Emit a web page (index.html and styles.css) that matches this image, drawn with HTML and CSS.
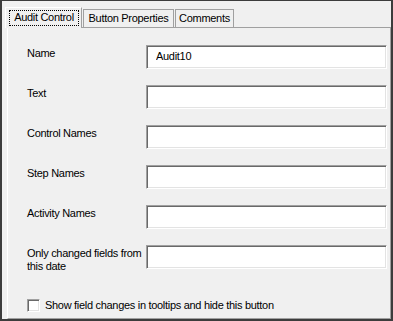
FILE: index.html
```html
<!DOCTYPE html>
<html>
<head>
  <title>Audit Control</title>
  <link rel="stylesheet" href="styles.css">
</head>

<body>
  <div class="window">
    <div class="tabs">
      <div class="tab tab-active"><span class="focus">Audit Control</span></div>
      <div class="tab tab-props">Button Properties</div>
      <div class="tab tab-comments">Comments</div>
    </div>

    <div class="page">
      <div class="row">
        <label for="name-input">Name</label>
        <input type="text" id="name-input" value="Audit10">
      </div>
      <div class="row">
        <label for="text-input">Text</label>
        <input type="text" id="text-input">
      </div>
      <div class="row">
        <label for="control-input">Control Names</label>
        <input type="text" id="control-input">
      </div>
      <div class="row">
        <label for="step-input">Step Names</label>
        <input type="text" id="step-input">
      </div>
      <div class="row">
        <label for="activity-input">Activity Names</label>
        <input type="text" id="activity-input">
      </div>
      <div class="row">
        <label for="date-input">Only changed fields from this date</label>
        <input type="text" id="date-input">
      </div>

      <div class="check-row">
        <span class="check-box"></span>
        <span>Show field changes in tooltips and hide this button</span>
      </div>
    </div>
  </div>
</body>
</html>
```

FILE: styles.css
```css
body {
  margin: 0;
  background-color: #f0f0f0;
  font-family: "Liberation Sans", Arial, sans-serif;
  font-size: 11px;
  line-height: 13px;
  letter-spacing: -0.3px;
  color: #000;
}

.window {
  display: flex;
  flex-direction: column;
  height: 321px;
  box-sizing: border-box;
  border: 2px solid #3c3c3c;
  border-top-width: 1px;
}

/* tab strip */
.tabs {
  display: flex;
  align-items: flex-end;
  height: 20px;
  padding: 6px 0 0 3px;
}

.tab {
  box-sizing: border-box;
  height: 18px;
  padding-top: 2px;
  border: 1px solid #a0a0a0;
  border-bottom: none;
  background-color: #f0f0f0;
  text-align: center;
  white-space: nowrap;
}

.tab-active {
  position: relative;
  z-index: 1;
  width: 77px;
  height: 21px;
  margin-bottom: -1px;
  padding-top: 0;
  border-color: #fff #a0a0a0 #fff #fff;
}

.tab-props {
  width: 91px;
  margin-left: 1px;
}

.tab-comments {
  width: 59px;
  margin-left: 1px;
}

.focus {
  display: block;
  margin: 2px 2px 0 3px;
  padding: 0 0 1px 0;
  border: 1px dotted #000;
}

/* page body */
.page {
  flex: 1;
  margin-left: 5px;
  padding: 17px 3px 0 19px;
  border: 1px solid #a0a0a0;
  border-left-color: #fff;
}

.row {
  display: flex;
  height: 24px;
  margin-bottom: 16px;
}

.row label {
  width: 119px;
  padding-top: 2px;
}

.row input {
  width: 241px;
  height: 24px;
  box-sizing: border-box;
  margin: 0;
  padding: 2px 2px 5px 9px;
  border: 1px solid;
  border-color: #a0a0a0 #fff #fff #a0a0a0;
  box-shadow: inset 1px 1px 0 #696969, inset -1px -1px 0 #e3e3e3;
  background-color: #fff;
  font-family: inherit;
  font-size: 11px;
  line-height: 13px;
  letter-spacing: -0.3px;
  color: #000;
  outline: none;
}

.check-row {
  display: flex;
  gap: 5px;
  margin-top: 30px;
}

.check-box {
  width: 13px;
  height: 13px;
  box-sizing: border-box;
  border: 1px solid;
  border-color: #a0a0a0 #fff #fff #a0a0a0;
  box-shadow: inset 1px 1px 0 #696969, inset -1px -1px 0 #e3e3e3;
  background-color: #fff;
}
```
